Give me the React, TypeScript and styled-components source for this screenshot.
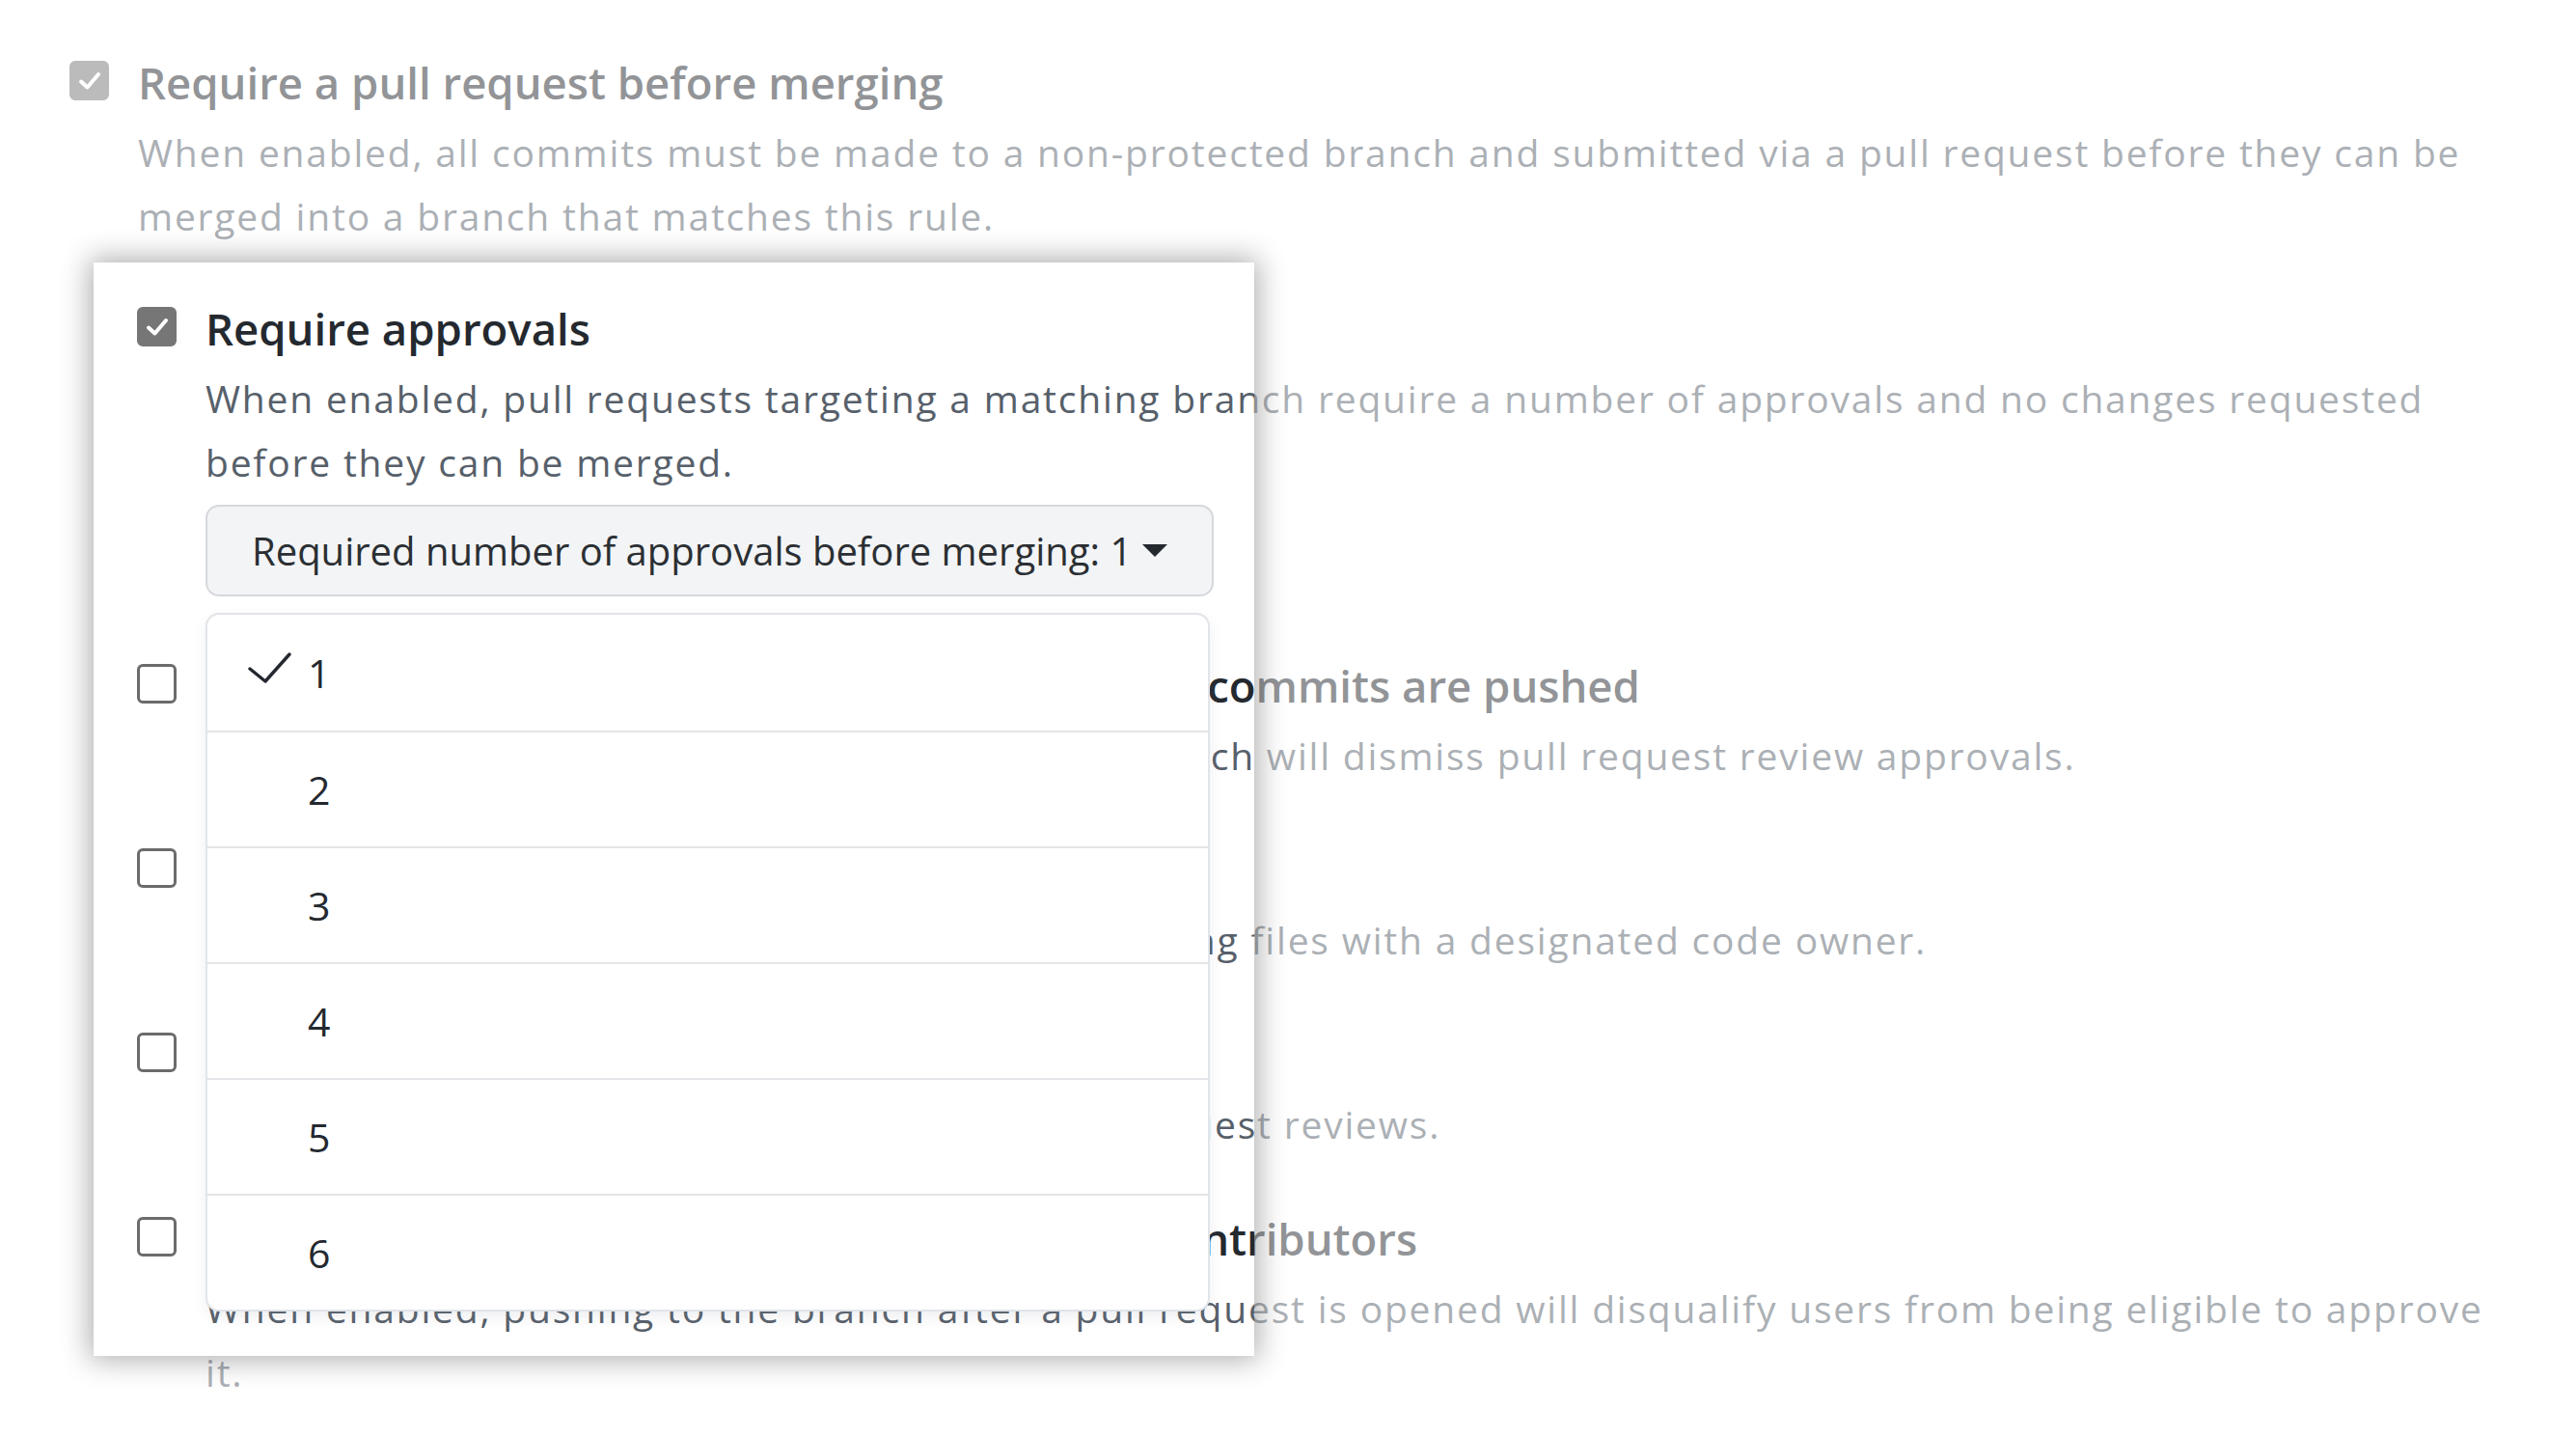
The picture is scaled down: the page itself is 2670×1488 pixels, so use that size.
import styled, { createGlobalStyle } from "styled-components"

const GlobalStyle = createGlobalStyle`
  html, body {
    margin: 0;
    padding: 0;
    background: #ffffff;
  }
  body {
    font-family: "Open Sans", "Noto Sans", sans-serif;
    color: #24292f;
  }
`

const Page = styled.div`
  position: relative;
  width: 2670px;
  height: 1488px;
  box-sizing: border-box;
  padding: 55px 48px 0 72px;
  overflow: hidden;
`

const Option = styled.div`
  display: grid;
  grid-template-columns: 41px 1fr;
  column-gap: 30px;
  align-items: start;
`

const Box = styled.span<{ $checked?: boolean }>`
  box-sizing: border-box;
  width: 41px;
  height: 41px;
  margin-top: 8px;
  border-radius: 6px;
  display: flex;
  align-items: center;
  justify-content: center;
  background: ${({ $checked }) => ($checked ? "#767676" : "#ffffff")};
  border: 3px solid ${({ $checked }) => ($checked ? "#767676" : "#6b6b6b")};
`

const Body = styled.div`
  display: flex;
  flex-direction: column;
`

const Title = styled.div`
  font-size: 45.5px;
  line-height: 60px;
  font-weight: 600;
  color: #24292f;
  white-space: nowrap;
`

const Note = styled.p`
  margin: 10px 0 0;
  font-size: 39px;
  letter-spacing: 1.8px;
  line-height: 66px;
  color: #57606a;
`

const SubList = styled.div`
  display: flex;
  flex-direction: column;
  gap: 55px;
  margin-top: 53px;
  margin-left: -1px;
`

const SelectWrap = styled.div`
  position: relative;
  margin: 11px 0 7px;
  align-self: flex-start;
`

const SelectButton = styled.button`
  display: inline-flex;
  align-items: center;
  gap: 11px;
  height: 95px;
  padding: 0 46px;
  box-sizing: border-box;
  border: 2px solid #d5d8dc;
  border-radius: 14px;
  background: #f3f4f6;
  color: #2b2f33;
  font-family: "Open Sans", "Noto Sans", sans-serif;
  font-size: 40px;
  cursor: pointer;
`

const Menu = styled.div`
  position: absolute;
  top: 112px;
  left: 0;
  width: 1041px;
  box-sizing: border-box;
  background: #ffffff;
  border: 2px solid #e1e4e8;
  border-radius: 14px;
  box-shadow: 0 6px 14px rgba(140, 149, 159, 0.15);
  overflow: hidden;
  z-index: 2;
`

const MenuItem = styled.div`
  display: flex;
  align-items: center;
  gap: 17px;
  height: 120px;
  box-sizing: border-box;
  padding-left: 41px;
  border-top: 2px solid #e3e5e8;
  font-size: 41px;
  color: #24292f;
  &:first-child {
    border-top: none;
  }
`

const CheckSlot = styled.span`
  width: 46px;
  height: 34px;
  display: flex;
  margin-top: -8px;
`

const Spotlight = styled.div`
  position: absolute;
  left: 97px;
  top: 272px;
  width: 1203px;
  height: 1133px;
  pointer-events: none;
  z-index: 5;
  box-shadow: 0 0 28px 4px rgba(0, 0, 0, 0.32), 0 0 0 3000px rgba(255, 255, 255, 0.5);
`

function Tick() {
  return (
    <svg width="26" height="22" viewBox="0 0 26 22">
      <path d="M4 11.5 L10.5 17.5 L22 4" fill="none" stroke="#ffffff" strokeWidth="4" strokeLinecap="round" strokeLinejoin="round" />
    </svg>
  )
}

function MenuCheck() {
  return (
    <svg width="46" height="34" viewBox="0 0 46 34">
      <path d="M3 17 L19 30 L44 2" fill="none" stroke="#24292f" strokeWidth="3.4" strokeLinecap="round" strokeLinejoin="round" />
    </svg>
  )
}

function Caret() {
  return (
    <svg width="26" height="13" viewBox="0 0 26 13">
      <path d="M0 0 H26 L13 13 Z" fill="#24292f" />
    </svg>
  )
}

const rules = [
  {
    title: "Dismiss stale pull request approvals when new commits are pushed",
    note: "New reviewable commits pushed to a matching branch will dismiss pull request review approvals.",
  },
  {
    title: "Require review from Code Owners",
    note: "Require an approved review in pull requests including files with a designated code owner.",
  },
  {
    title: "Restrict who can dismiss pull request reviews",
    note: "Specify people or teams allowed to dismiss pull request reviews.",
  },
  {
    title: "Prevent approval from users who are recent contributors",
    note: "When enabled, pushing to the branch after a pull request is opened will disqualify users from being eligible to approve it.",
  },
]

export default function App() {
  const selected = 1

  return (
    <Page>
      <GlobalStyle />
      <Option>
        <Box $checked><Tick /></Box>
        <Body>
          <Title>Require a pull request before merging</Title>
          <Note>
            When enabled, all commits must be made to a non-protected branch and submitted via a pull request before they can be merged into a branch that matches this rule.
          </Note>
          <SubList>
            <Option>
              <Box $checked><Tick /></Box>
              <Body>
                <Title>Require approvals</Title>
                <Note>
                  When enabled, pull requests targeting a matching branch require a number of approvals and no changes requested before they can be merged.
                </Note>
                <SelectWrap>
                  <SelectButton>
                    Required number of approvals before merging: {selected}
                    <Caret />
                  </SelectButton>
                  <Menu>
                    {[1, 2, 3, 4, 5, 6].map((n) => (
                      <MenuItem key={n}>
                        <CheckSlot>{n === selected ? <MenuCheck /> : null}</CheckSlot>
                        {n}
                      </MenuItem>
                    ))}
                  </Menu>
                </SelectWrap>
              </Body>
            </Option>
            {rules.map((r) => (
              <Option key={r.title}>
                <Box />
                <Body>
                  <Title>{r.title}</Title>
                  <Note>{r.note}</Note>
                </Body>
              </Option>
            ))}
          </SubList>
        </Body>
      </Option>
      <Spotlight />
    </Page>
  )
}
